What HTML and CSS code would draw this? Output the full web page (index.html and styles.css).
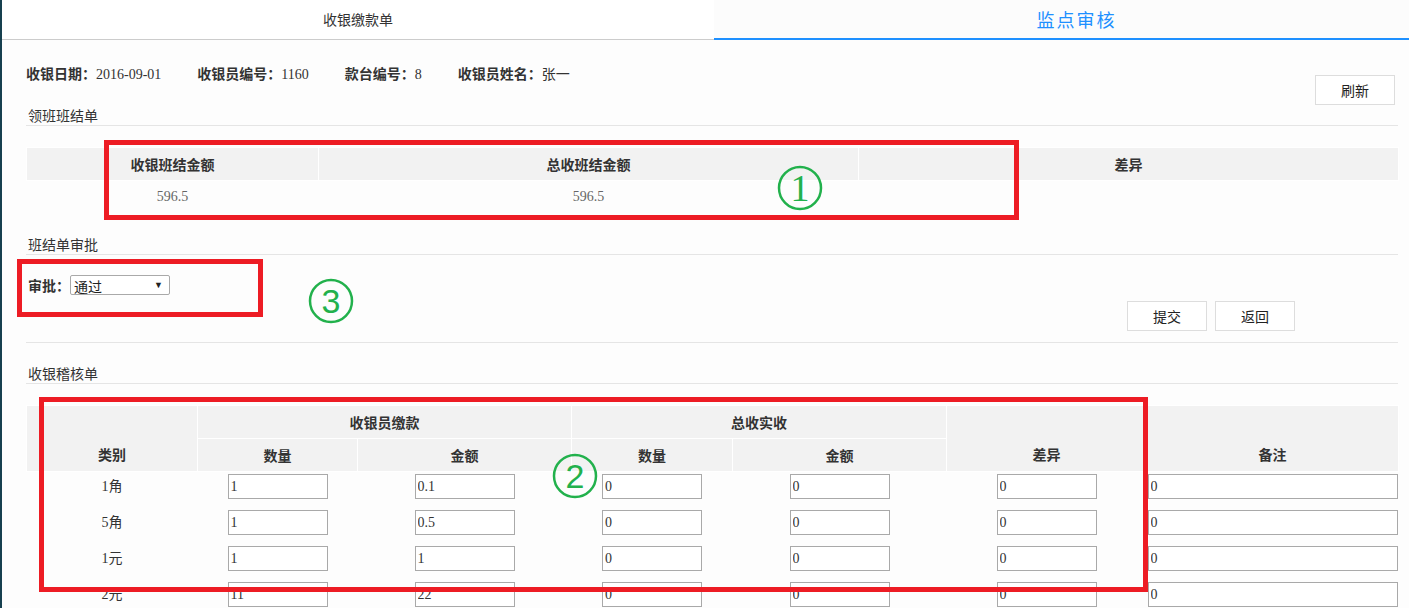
FILE: index.html
```html
<!DOCTYPE html>
<html lang="zh-CN">
<head>
    <meta charset="UTF-8">
    <title>监点审核</title>
    <link rel="stylesheet" href="styles.css">
</head>
<body>
    <div class="tabs">
        <div class="tab">收银缴款单</div>
        <div class="tab active">监点审核</div>
    </div>

    <div class="content">
        <div class="head">
            <div class="info">
                <span class="info-item"><b>收银日期：</b>2016-09-01</span>
                <span class="info-item"><b>收银员编号：</b>1160</span>
                <span class="info-item"><b>款台编号：</b>8</span>
                <span class="info-item"><b>收银员姓名：</b>张一</span>
            </div>
            <button class="btn btn-refresh">刷新</button>
        </div>

        <div class="section-title">领班班结单</div>
        <table class="grid sum-table">
            <colgroup>
                <col style="width:292px">
                <col style="width:540px">
                <col style="width:540px">
            </colgroup>
            <tr>
                <th>收银班结金额</th>
                <th>总收班结金额</th>
                <th>差异</th>
            </tr>
            <tr>
                <td>596.5</td>
                <td>596.5</td>
                <td></td>
            </tr>
        </table>

        <div class="section-title title-approve">班结单审批</div>
        <div class="approve">
            <div class="field">
                <b>审批：</b>
                <span class="select-wrap">
                    <select>
                        <option>通过</option>
                        <option>不通过</option>
                    </select>
                </span>
            </div>
            <div class="actions">
                <button class="btn">提交</button>
                <button class="btn">返回</button>
            </div>
        </div>

        <div class="section-title title-audit">收银稽核单</div>
        <table class="grid audit-table">
            <colgroup>
                <col style="width:171px">
                <col style="width:160px">
                <col style="width:214px">
                <col style="width:161px">
                <col style="width:214px">
                <col style="width:200px">
                <col style="width:252px">
            </colgroup>
            <thead>
                <tr class="head-top">
                    <th rowspan="2" class="bottom">类别</th>
                    <th colspan="2">收银员缴款</th>
                    <th colspan="2">总收实收</th>
                    <th rowspan="2" class="bottom">差异</th>
                    <th rowspan="2" class="bottom">备注</th>
                </tr>
                <tr class="head-sub">
                    <th>数量</th>
                    <th>金额</th>
                    <th>数量</th>
                    <th>金额</th>
                </tr>
            </thead>
            <tbody>
                <tr>
                    <td class="kind">1角</td>
                    <td><input type="text" value="1"></td>
                    <td><input type="text" value="0.1"></td>
                    <td><input type="text" value="0"></td>
                    <td><input type="text" value="0"></td>
                    <td><input type="text" value="0"></td>
                    <td><input type="text" class="wide" value="0"></td>
                </tr>
                <tr>
                    <td class="kind">5角</td>
                    <td><input type="text" value="1"></td>
                    <td><input type="text" value="0.5"></td>
                    <td><input type="text" value="0"></td>
                    <td><input type="text" value="0"></td>
                    <td><input type="text" value="0"></td>
                    <td><input type="text" class="wide" value="0"></td>
                </tr>
                <tr>
                    <td class="kind">1元</td>
                    <td><input type="text" value="1"></td>
                    <td><input type="text" value="1"></td>
                    <td><input type="text" value="0"></td>
                    <td><input type="text" value="0"></td>
                    <td><input type="text" value="0"></td>
                    <td><input type="text" class="wide" value="0"></td>
                </tr>
                <tr>
                    <td class="kind">2元</td>
                    <td><input type="text" value="11"></td>
                    <td><input type="text" value="22"></td>
                    <td><input type="text" value="0"></td>
                    <td><input type="text" value="0"></td>
                    <td><input type="text" value="0"></td>
                    <td><input type="text" class="wide" value="0"></td>
                </tr>
            </tbody>
        </table>
    </div>

    <!-- 标注层 -->
    <div class="mark-box box-sum"></div>
    <div class="mark-box box-approve"></div>
    <div class="mark-box box-audit"></div>

    <svg class="mark-num num-1" width="46" height="46" viewBox="0 0 46 46">
        <circle cx="23" cy="23" r="21" fill="none" stroke="#22b14c" stroke-width="2.5"/>
        <text x="23" y="36" text-anchor="middle" class="num-serif">1</text>
    </svg>
    <svg class="mark-num num-2" width="46" height="46" viewBox="0 0 46 46">
        <circle cx="23" cy="23" r="21" fill="none" stroke="#22b14c" stroke-width="2.5"/>
        <text x="23" y="35" text-anchor="middle" class="num-sans">2</text>
    </svg>
    <svg class="mark-num num-3" width="46" height="46" viewBox="0 0 46 46">
        <circle cx="23" cy="23" r="21" fill="none" stroke="#22b14c" stroke-width="2.5"/>
        <text x="23" y="35" text-anchor="middle" class="num-sans">3</text>
    </svg>
</body>
</html>
```

FILE: styles.css
```css
body {
    margin: 0;
    border-left: 2px solid #17404f;
    background: #fdfdfd;
    font-family: "Liberation Serif", "Noto Sans CJK SC", serif;
    font-size: 14px;
    color: #333;
}
b { font-family: "Noto Sans CJK SC", sans-serif; }

/* 顶部页签 */
.tabs {
    display: grid;
    grid-template-columns: 712px 1fr;
    background: #fff;
    border-bottom: 1px solid #ccc;
}
.tab {
    height: 39px;
    line-height: 39px;
    text-align: center;
    font-family: "Noto Sans CJK SC", sans-serif;
    font-size: 14px;
    color: #333;
}
.tab.active {
    height: 38px;
    margin-bottom: -1px;
    padding-left: 30px;
    border-bottom: 2px solid #1e90ff;
    background: #fcfcfc;
    color: #1e90ff;
    font-size: 18px;
    letter-spacing: 2px;
}

.content { padding: 0 11px 0 24px; }

.head {
    display: flex;
    justify-content: space-between;
    align-items: flex-start;
    padding-top: 23px;
}
.info { display: flex; line-height: 20px; }
.info-item { margin-right: 36px; }

.btn {
    width: 80px;
    height: 30px;
    padding: 0;
    border: 1px solid #ddd;
    background: #fff;
    font-family: "Noto Sans CJK SC", sans-serif;
    font-size: 14px;
    color: #222;
}
.btn-refresh { margin-top: 12px; margin-right: 3px; }

.section-title {
    height: 20px;
    line-height: 20px;
    padding-left: 2px;
    border-bottom: 1px solid #e5e5e5;
    font-family: "Noto Sans CJK SC", sans-serif;
    color: #333;
}
.title-approve { margin-top: 21px; }
.title-audit { margin-top: 20px; }

/* 表格 */
.grid {
    width: 100%;
    border-collapse: collapse;
    table-layout: fixed;
}
.grid th {
    height: 32px;
    padding: 0;
    border: 1px solid #fff;
    background: #f2f2f2;
    font-family: "Noto Sans CJK SC", sans-serif;
    font-weight: bold;
    color: #333;
}
.sum-table { margin-top: 21px; }
.sum-table td {
    height: 32px;
    padding: 0;
    text-align: center;
    color: #666;
}

.audit-table { margin-top: 21px; }
.audit-table .head-sub th { height: 32px; }
.audit-table th.bottom { vertical-align: bottom; line-height: 33px; }
.audit-table td {
    padding: 2px 0 9px;
    text-align: center;
    vertical-align: top;
}
.audit-table td.kind { line-height: 25px; color: #333; }
.audit-table input {
    width: 100px;
    height: 25px;
    box-sizing: border-box;
    margin: 0;
    padding: 0 2px;
    border: 1px solid #a9a9a9;
    background: #fff;
    font-family: "Liberation Serif", serif;
    font-size: 14px;
    color: #333;
}
.audit-table input.wide { width: 250px; }

/* 审批 */
.approve {
    padding: 20px 0 11px;
    border-bottom: 1px solid #e5e5e5;
}
.field { display: flex; align-items: center; height: 20px; padding-left: 2px; }
.select-wrap { position: relative; display: inline-block; }
.select-wrap select {
    width: 100px;
    height: 20px;
    padding: 0 0 0 3px;
    border: 1px solid #a9a9a9;
    border-radius: 2px;
    background: #fff;
    appearance: none;
    font-family: "Noto Sans CJK SC", sans-serif;
    font-size: 14px;
    color: #222;
}
.select-wrap::after {
    content: "▼";
    position: absolute;
    right: 7px;
    top: 4px;
    font-size: 9px;
    line-height: 12px;
    color: #222;
    pointer-events: none;
}
.actions {
    display: flex;
    justify-content: flex-end;
    gap: 8px;
    margin-top: 6px;
    margin-right: 103px;
}

/* 标注 */
.mark-box {
    position: absolute;
    box-sizing: border-box;
    border: 5px solid #ed1c24;
}
.box-sum { left: 104px; top: 140px; width: 915px; height: 80px; }
.box-approve { left: 17px; top: 259px; width: 246px; height: 58px; }
.box-audit { left: 39px; top: 397px; width: 1109px; height: 195px; }

.mark-num { position: absolute; }
.num-1 { left: 777px; top: 165px; }
.num-2 { left: 552px; top: 453px; }
.num-3 { left: 308px; top: 278px; }
.num-serif { font-family: "Liberation Serif", serif; font-size: 38px; fill: #22b14c; }
.num-sans { font-family: "Liberation Sans", sans-serif; font-size: 34px; fill: #22b14c; }
```
